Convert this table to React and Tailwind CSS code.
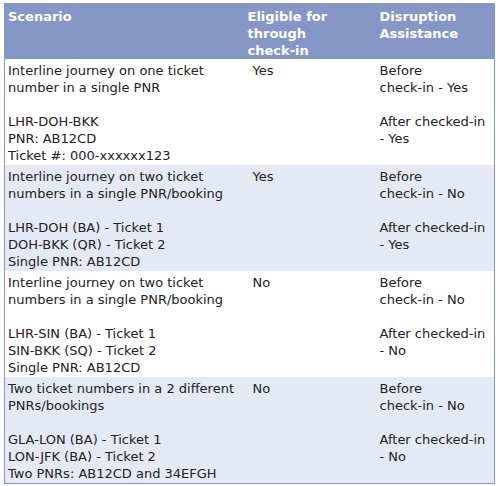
const ROWS = [
  {
    scenario: ['Interline journey on one ticket', 'number in a single PNR', '', 'LHR-DOH-BKK', 'PNR: AB12CD', 'Ticket #: 000-xxxxxx123'],
    eligible: 'Yes',
    assist: ['Before', 'check-in - Yes', '', 'After checked-in', '- Yes'],
  },
  {
    scenario: ['Interline journey on two ticket', 'numbers in a single PNR/booking', '', 'LHR-DOH (BA) - Ticket 1', 'DOH-BKK (QR) - Ticket 2', 'Single PNR: AB12CD'],
    eligible: 'Yes',
    assist: ['Before', 'check-in - No', '', 'After checked-in', '- Yes'],
  },
  {
    scenario: ['Interline journey on two ticket', 'numbers in a single PNR/booking', '', 'LHR-SIN (BA) - Ticket 1', 'SIN-BKK (SQ) - Ticket 2', 'Single PNR: AB12CD'],
    eligible: 'No',
    assist: ['Before', 'check-in - No', '', 'After checked-in', '- No'],
  },
  {
    scenario: ['Two ticket numbers in a 2 different', 'PNRs/bookings', '', 'GLA-LON (BA) - Ticket 1', 'LON-JFK (BA) - Ticket 2', 'Two PNRs: AB12CD and 34EFGH'],
    eligible: 'No',
    assist: ['Before', 'check-in - No', '', 'After checked-in', '- No'],
  },
]

function Lines({ items }) {
  return items.map((t, i) => (t ? <div key={i} className="whitespace-nowrap">{t}</div> : <div key={i} className="h-[17px]" />))
}

export default function App() {
  return (
    <div className="pt-[3px] pl-[4px] font-['DejaVu_Sans','Verdana',sans-serif] text-[13px] leading-[17px] text-[#222]">
      <table className="w-[491px] table-fixed border-collapse border border-[#8597c6]">
        <colgroup>
          <col className="w-[241px]" />
          <col className="w-[131px]" />
          <col />
        </colgroup>
        <thead>
          <tr className="bg-[#8597c6] text-white font-bold text-left align-top">
            <th className="pl-[3px] pr-1 pt-[4px] pb-0"><Lines items={['Scenario']} /></th>
            <th className="pl-[2px] pr-1 pt-[4px] pb-0"><Lines items={['Eligible for', 'through', 'check-in']} /></th>
            <th className="pl-[3px] pr-1 pt-[4px] pb-0"><Lines items={['Disruption', 'Assistance']} /></th>
          </tr>
        </thead>
        <tbody>
          {ROWS.map((r, i) => (
            <tr key={i} className={`align-top ${i % 2 ? 'bg-[#e5e9f6]' : 'bg-white'}`}>
              <td className="pl-[3px] pr-1 pt-[3px] pb-[1px]"><Lines items={r.scenario} /></td>
              <td className="pl-[7px] pr-1 pt-[3px] pb-[1px]">{r.eligible}</td>
              <td className="pl-[3px] pr-1 pt-[3px] pb-[1px]"><Lines items={r.assist} /></td>
            </tr>
          ))}
        </tbody>
      </table>
    </div>
  )
}
